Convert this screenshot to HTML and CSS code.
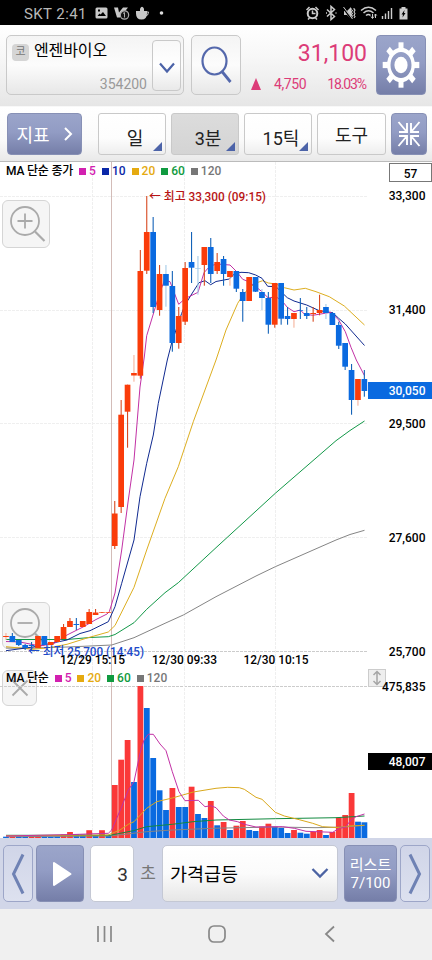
FILE: index.html
```html
<!DOCTYPE html>
<html lang="ko">
<head>
    <meta charset="UTF-8">
    <meta name="viewport" content="width=device-width, initial-scale=1.0">
    <title>엔젠바이오</title>
    <link rel="stylesheet" href="styles.css">
</head>
<body>

    <div class="status-bar">
        <span class="carrier">SKT 2:41</span>
        <svg class="status-left" width="72" height="25" viewBox="94 0 72 25">
            <path fill="#c8c8c8" fill-rule="evenodd" d="M97 7.500h9q1.500 0 1.500 1.500v8q0 1.500-1.500 1.500h-9q-1.500 0-1.500-1.500v-8q0-1.500 1.500-1.500zM97.500 16h8.500l-3-4-2.500 2.500-1-1zM98 9.500v2h2v-2z"/>
            <path fill="#c8c8c8" d="M114 7.500h4l1 5 4-5h5l-8 10h-3z"/>
            <circle cx="124.500" cy="15" r="4.200" fill="#111" stroke="#aaa" stroke-width="1.200"/>
            <path d="M124.500 12.500v5M123 13.500l1.500-1" stroke="#aaa" fill="none"/>
            <path fill="#c8c8c8" d="M136 11h11v2.500q0 6-5.500 6t-5.500-6zM140 8.500h4v3h-4z"/>
            <circle cx="142" cy="8.200" r="1.500" fill="#c8c8c8"/>
            <path d="M146 12h2.500q0 4-3.500 4" stroke="#c8c8c8" fill="none"/>
            <circle cx="161.500" cy="13" r="1.800" fill="#ddd"/>
        </svg>
        <svg class="status-right" width="108" height="25" viewBox="304 0 108 25">
            <g fill="none" stroke="#ccc" stroke-width="1.500">
                <circle cx="312.500" cy="13.500" r="4.800" stroke-width="2"/>
                <path d="M312.500 10.500v3h3M306.500 10l3-3M318.500 10l-3-3M308 19.500l1.500-1.500M317 19.500l-1.500-1.500"/>
                <path d="M327 9.500l7.500 7-3.500 3v-13l3.500 3-7.500 7M326 13h1M335.500 13h1"/>
                <path d="M351 8l-.1 1.500 1.500 1-1.500 1.500 1.500 1.500-1.500 1.500 1.500 1-1 2M354 8v1l1 1-1 2 1 1.500-1 2 1 1-1 1.500" stroke-width="1.100"/>
                <path d="M361 10.500q7.500-6.500 15 0M363.500 13q5-4.500 10 0M366 15.500q2.500-2 4.500 0"/>
                <path d="M372.500 14v4M371 16.500l1.500 2 1.500-2M375.500 18v-4M374.300 15.500l1.200-1.500 1.200 1.500" stroke-width="1"/>
                <path d="M382.500 19v-3M385.500 19v-5.500M388.500 19v-8M391.500 19v-11" stroke-width="1.400"/>
            </g>
            <path fill="#ccc" d="M344 11h3l4-4v12l-4-4h-3z"/>
            <path d="M343.500 8l8 11" stroke="#000" stroke-width="2"/>
            <path d="M343.500 7l9 12" stroke="#ccc"/>
            <path fill="#ccc" fill-rule="evenodd" d="M401.500 7h4v1.500h2v11h-8v-11h2zM404.500 10l-3 4.500h1.500l-.5 3 3-4.500h-1.500z"/>
        </svg>
    </div>

    <div class="header">
        <div class="stock-box">
            <div class="stock-info">
                <div class="stock-name"><span class="market">코</span>엔젠바이오</div>
                <div class="stock-code">354200</div>
            </div>
            <button class="stock-more">
                <svg width="18" height="14" viewBox="0 0 18 14"><path d="M2 2.500l7 8 7-8" fill="none" stroke="#4c63a8" stroke-width="2.200"/></svg>
            </button>
        </div>
        <button class="search-btn">
            <svg width="34" height="42" viewBox="0 0 34 42">
                <ellipse cx="15.500" cy="17" rx="12" ry="13.500" fill="none" stroke="#5468ac" stroke-width="2.200"/>
                <path d="M23 27.500l8.500 10.500" stroke="#5468ac" stroke-width="2.800"/>
            </svg>
        </button>
        <div class="price-box">
            <div class="price">31,100</div>
            <div class="change">
                <span class="up"></span>
                <span class="diff">4,750</span>
                <span class="rate">18.03%</span>
            </div>
        </div>
        <button class="blue-btn gear-btn">
            <svg width="38" height="46" viewBox="-19 -23 38 46">
                <g transform="scale(1 1.240)">
                    <circle r="12.200" fill="none" stroke="#fff" stroke-width="3.400"/>
                    <g id="teeth" fill="#fff"></g>
                    <circle r="6.600" fill="#fff"/>
                </g>
            </svg>
        </button>
    </div>

    <div class="toolbar">
        <button class="blue-btn index-btn">지표
            <svg width="10" height="16" viewBox="0 0 10 16"><path d="M2 2l6 6-6 6" fill="none" stroke="#fff" stroke-width="2"/></svg>
        </button>
        <button class="period corner">일</button>
        <button class="period corner active">3분</button>
        <button class="period corner">15틱</button>
        <button class="period tool">도구</button>
        <button class="blue-btn shrink-btn">
            <svg width="24" height="28" viewBox="0 0 24 28" fill="none" stroke="#fff" stroke-width="1.900">
                <path d="M1.500 2l8 9.500M10 3v9h-8M22.500 2l-8 9.500M14 3v9h8M1.500 26l8-9.500M10 25v-9h-8M22.500 26l-8-9.500M14 25v-9h8"/>
            </svg>
        </button>
    </div>

    <div class="chart price-chart">
        <svg id="priceChart" class="plot" width="432" height="506" viewBox="0 162 432 506"></svg>
        <div class="legend">
            <span class="legend-title">MA 단순 종가</span>
            <span class="ma ma5">5</span>
            <span class="ma ma10">10</span>
            <span class="ma ma20">20</span>
            <span class="ma ma60">60</span>
            <span class="ma ma120">120</span>
        </div>
        <div class="count">57</div>
        <button class="overlay-btn zoom-in">
            <svg width="40" height="42" viewBox="0 0 40 42" fill="none" stroke="#aaa" stroke-width="1.800">
                <circle cx="19" cy="18" r="14"/><path d="M11.500 18h15M19 10.500v15"/><path d="M29 28.500l9.500 9.500" stroke-width="2.200"/>
            </svg>
        </button>
        <button class="overlay-btn zoom-out">
            <svg width="40" height="42" viewBox="0 0 40 42" fill="none" stroke="#aaa" stroke-width="1.800">
                <circle cx="19" cy="18" r="14"/><path d="M11.500 18h15"/><path d="M29 28.500l9.500 9.500" stroke-width="2.200"/>
            </svg>
        </button>
    </div>

    <div class="chart volume-chart">
        <svg id="volumeChart" class="plot" width="432" height="170" viewBox="0 668 432 170"></svg>
        <div class="legend">
            <span class="legend-title">MA 단순</span>
            <span class="ma ma5">5</span>
            <span class="ma ma20">20</span>
            <span class="ma ma60">60</span>
            <span class="ma ma120">120</span>
        </div>
        <button class="overlay-btn close-btn">
            <svg width="18" height="18" viewBox="0 0 18 18"><path d="M1.500 1.500l15 15M16.500 1.500l-15 15" stroke="#aaa" stroke-width="1.800"/></svg>
        </button>
        <button class="resize-btn">
            <svg width="10" height="16" viewBox="0 0 10 16"><path d="M5 1.500v13M1.500 5l3.500-3.500 3.500 3.500M1.500 11l3.500 3.500 3.500-3.500" fill="none" stroke="#a5a5a5" stroke-width="1.500"/></svg>
        </button>
    </div>

    <div class="bottom-bar">
        <button class="arrow-btn">
            <svg width="16" height="42" viewBox="0 0 16 42"><path d="M13 1.500l-9.500 19.500 9.500 19.500" fill="none" stroke="#6f82b4" stroke-width="3"/></svg>
        </button>
        <button class="blue-btn play-btn">
            <svg width="22" height="28" viewBox="0 0 22 28"><path d="M3 3l16.500 11-16.500 11z" fill="#fff" stroke="#fff" stroke-width="2" stroke-linejoin="round"/></svg>
        </button>
        <div class="seconds">3</div>
        <span class="unit">초</span>
        <div class="select">가격급등
            <svg width="18" height="12" viewBox="0 0 18 12"><path d="M1.500 2l7.500 7.500 7.500-7.500" fill="none" stroke="#4c63a3" stroke-width="2.300"/></svg>
        </div>
        <button class="blue-btn list-btn"><span>리스트</span><span>7/100</span></button>
        <button class="arrow-btn">
            <svg width="16" height="42" viewBox="0 0 16 42"><path d="M3 1.500l9.500 19.500-9.500 19.500" fill="none" stroke="#6f82b4" stroke-width="3"/></svg>
        </button>
    </div>

    <div class="nav-bar">
        <svg width="18" height="18" viewBox="0 0 18 18"><path d="M2 1v16M8.500 1v16M15 1v16" stroke="#888" stroke-width="1.700"/></svg>
        <svg width="20" height="20" viewBox="0 0 20 20"><rect x="2" y="2" width="16" height="16" rx="5" fill="none" stroke="#888" stroke-width="1.700"/></svg>
        <svg width="12" height="18" viewBox="0 0 12 18"><path d="M10 1.500l-8 7.500 8 7.500" fill="none" stroke="#888" stroke-width="1.800"/></svg>
    </div>

    <script src="script.js"></script>

</body>
</html>
```
FILE: styles.css
```css
* {
    box-sizing: border-box;
}

body {
    width: 432px;
    margin: 0;
    background: #fff;
    font-family: Roboto, "Noto Sans CJK KR", sans-serif;
    color: #000;
}

button {
    margin: 0;
    padding: 0;
    border: none;
    font-family: inherit;
    cursor: pointer;
}

svg {
    display: block;
    flex-shrink: 0;
}

.status-bar {
    display: flex;
    align-items: center;
    height: 25px;
    padding: 0 20px 0 24px;
    background: #000;
}

.carrier {
    width: 70px;
    padding-top: 3px;
    font-size: 15px;
    line-height: 20px;
    letter-spacing: 0.4px;
    color: #b8b8b8;
    white-space: nowrap;
}

.status-right {
    margin-left: auto;
}

.header {
    display: flex;
    height: 82px;
    padding: 10px 6px 11px;
    background: linear-gradient(#fff, #f7f7f7 40%, #e6e6e6);
    border-bottom: 1px solid #f8f8f8;
}

.stock-box,
.search-btn {
    border: 1px solid #c9c9c9;
    border-radius: 5px;
    background: linear-gradient(#f4f4f4, #fcfcfc 50%, #e7e7e7);
}

.stock-box {
    display: flex;
    width: 178px;
    padding: 4px 2px 3px 5px;
}

.stock-info {
    flex: 1;
}

.stock-name {
    display: flex;
    height: 22px;
    font-size: 16px;
    line-height: 21px;
    letter-spacing: -0.1px;
    white-space: nowrap;
}

.market {
    width: 17px;
    height: 17px;
    margin: 4px 5px 0 0;
    border-radius: 4px;
    background: #d5d5d5;
    font-size: 11px;
    line-height: 16px;
    text-align: center;
    color: #777;
}

.stock-code {
    padding: 13px 5px 0 0;
    font-size: 14px;
    line-height: 18px;
    text-align: right;
    color: #999;
}

.stock-more {
    display: flex;
    align-items: center;
    justify-content: center;
    width: 29px;
    border: 1px solid #c9c9c9;
    border-radius: 4px;
    background: linear-gradient(#f8f8f8, #fff 50%, #e9e9e9);
}

.stock-more svg {
    margin-top: 4px;
}

.search-btn {
    display: flex;
    align-items: center;
    justify-content: center;
    width: 50px;
    margin-left: 7px;
}

.price-box {
    width: 127px;
    padding-right: 1px;
    color: #dc3c78;
}

.price {
    height: 38px;
    padding-top: 5px;
    font-size: 23px;
    line-height: 28px;
    text-align: right;
}

.change {
    display: flex;
    align-items: center;
    justify-content: flex-end;
    font-size: 14px;
    line-height: 22px;
}

.up {
    margin-right: 13px;
    border: 5px solid transparent;
    border-top: 0;
    border-bottom: 12px solid #dc3c78;
}

.diff {
    margin-right: 21px;
    letter-spacing: -0.4px;
}

.rate {
    letter-spacing: -1.1px;
    padding-right: 1px;
}

.blue-btn {
    display: flex;
    align-items: center;
    justify-content: center;
    border: 1px solid #8790b5;
    border-radius: 4px;
    background: linear-gradient(#9ba5ca, #929cc4 45%, #757ea8);
    color: #fff;
}

.gear-btn {
    width: 50px;
    margin-left: 8px;
}

.toolbar {
    display: flex;
    height: 55px;
    padding: 6px 5px 6px 7px;
    background: linear-gradient(#fff, #fafafa 60%, #e9e9e9);
    border-bottom: 1px solid #bbb;
}

.index-btn {
    width: 75px;
    margin-right: 16px;
    gap: 13px;
    font-size: 18px;
}

.period {
    position: relative;
    width: 68px;
    margin-right: 5px;
    padding: 5px 0 0 6px;
    border: 1px solid #c9c9c9;
    border-radius: 3px;
    background: linear-gradient(#fff, #fdfdfd 60%, #eee);
    font-size: 18px;
    color: #222;
}

.period.active {
    background: linear-gradient(#dcdcdc, #d4d4d4);
}

.period.tool {
    width: 69px;
    padding: 0;
}

.corner::after {
    content: "";
    position: absolute;
    right: 3px;
    bottom: 3px;
    border-left: 9px solid transparent;
    border-bottom: 9px solid #4c63a8;
}

.shrink-btn {
    width: 36px;
}

.chart {
    position: relative;
}

/* the plot is painted over the zoom and close buttons */
.plot {
    position: relative;
    z-index: 1;
    pointer-events: none;
}

.price-chart {
    height: 506px;
}

.volume-chart {
    height: 170px;
}

.chart text {
    font-size: 12px;
    font-weight: 500;
}

.legend {
    position: absolute;
    z-index: 2;
    top: 1px;
    left: 6px;
    display: flex;
    font-size: 12px;
    font-weight: 500;
    line-height: 16px;
    white-space: nowrap;
}

.volume-chart .legend {
    top: 2px;
}

.legend-title {
    margin-right: 6px;
    letter-spacing: -0.2px;
}

.ma {
    display: flex;
    align-items: center;
    margin-right: 6px;
}

.ma::before {
    content: "";
    width: 7px;
    height: 7px;
    margin-right: 3px;
    background: currentColor;
}

.ma5 {
    color: #d220b0;
}

.ma10 {
    color: #0a28a8;
}

.ma20 {
    color: #e5aa10;
}

.ma60 {
    color: #109a40;
}

.ma120 {
    color: #777;
}

.count {
    position: absolute;
    z-index: 2;
    top: 1px;
    right: 0;
    width: 43px;
    height: 19px;
    border: 1px solid #777;
    background: #fff;
    font-size: 12px;
    font-weight: 500;
    line-height: 21px;
    text-align: center;
}

.overlay-btn {
    position: absolute;
    left: 2px;
    display: flex;
    align-items: center;
    justify-content: center;
    width: 48px;
    height: 48px;
    border: 1px solid #d5d5d5;
    border-radius: 6px;
    background: #f5f5f5;
}

.zoom-in {
    top: 38px;
}

.zoom-out {
    top: 440px;
    height: 47px;
}

.close-btn {
    top: 2px;
    width: 35px;
    height: 36px;
}

.resize-btn {
    position: absolute;
    top: 1px;
    left: 368px;
    display: flex;
    align-items: center;
    justify-content: center;
    width: 18px;
    height: 18px;
    border: 1px solid #ccc;
    background: #eee;
}

.bottom-bar {
    display: flex;
    height: 71px;
    padding: 7px 2px 7px 3px;
    background: #d1d6e8;
}

.arrow-btn {
    display: flex;
    align-items: center;
    justify-content: center;
    width: 30px;
    border: 1px solid #9da6c8;
    border-radius: 5px;
    background: linear-gradient(#d0d5e8, #dde1ef);
}

.play-btn {
    width: 48px;
    margin: 0 6px 0 3px;
    padding-left: 4px;
}

.seconds {
    width: 44px;
    padding-right: 5px;
    border: 1px solid #c4c8d4;
    border-radius: 5px;
    background: #fff;
    font-size: 19px;
    line-height: 57px;
    text-align: right;
    color: #333;
}

.unit {
    width: 28px;
    font-size: 17px;
    line-height: 56px;
    text-align: center;
    color: #777;
}

.select {
    display: flex;
    align-items: center;
    justify-content: space-between;
    width: 176px;
    padding: 0 8px 1px 7px;
    border: 1px solid #c4c8d4;
    border-radius: 5px;
    background: linear-gradient(#fff, #fbfbfb 50%, #e6e6e6);
    font-size: 18.500px;
}

.list-btn {
    flex-direction: column;
    width: 53px;
    margin: 0 3px 0 6px;
    font-size: 15px;
    line-height: 18px;
}

.nav-bar {
    display: flex;
    align-items: center;
    height: 51px;
    padding: 0 0 2px 96px;
    background: #f0f0f0;
    gap: 95px;
}

.nav-bar svg:nth-child(2) {
    margin: 0 2px 0 -2px;
}
```
FILE: script.js
```js
const SVG = 'http://www.w3.org/2000/svg';
const priceChart = document.getElementById('priceChart');
const volumeChart = document.getElementById('volumeChart');

const STEP = 6.4;
const FIRST = 5.9;
const RED = '#fa3c0a';
const BLUE = '#0a6ae0';

// direction, high, body top, body bottom, low
const candles = [
    ['r', 633, 636, 637, 640], ['b', 633, 636, 642, 642], ['b', 640, 640, 645, 646],
    ['b', 644, 645, 648, 650], ['b', 642, 645, 646, 650], ['r', 636, 636, 648, 648],
    ['b', 636, 636, 645, 645], ['r', 642, 642, 645, 645], ['r', 636, 636, 642, 642],
    ['r', 624, 627, 639, 639], ['r', 618, 621, 627, 627], ['b', 618, 624, 625, 630],
    ['r', 621, 621, 627, 627], ['r', 609, 612, 624, 624], ['r', 609, 612.5, 615, 615],
    ['r', 612, 612, 612.7, 613], ['r', 612, 612, 612.7, 613], ['r', 501, 513.5, 546, 549],
    ['r', 400, 414.7, 507, 513], ['r', 384.7, 384.7, 411.7, 447.7], ['r', 355, 373, 375.5, 381.7],
    ['r', 250, 271, 375.7, 378.7], ['r', 196, 232, 270.7, 274], ['b', 217, 232, 307, 313],
    ['r', 265, 274, 310, 315.7], ['b', 265, 274, 285.7, 306.7], ['b', 271, 286, 343, 351.7],
    ['r', 307, 316, 343, 348.7], ['r', 262, 268, 321.7, 325], ['b', 232, 262, 267.7, 283],
    ['b', 256, 268, 268.7, 294.7], ['r', 247, 247, 265, 285.7], ['b', 238, 247, 274, 283],
    ['r', 253, 262, 271, 274], ['b', 256, 259, 274, 285.7], ['r', 271, 271, 277, 285.7],
    ['b', 271, 271, 288.7, 292], ['b', 289, 292, 301, 321.7], ['r', 277, 277, 301, 301],
    ['b', 277, 277, 291.7, 292], ['b', 289, 292, 298, 310], ['b', 292, 298, 324.7, 333.7],
    ['r', 283, 283, 324.7, 327.7], ['b', 283, 283, 318.7, 324.7], ['b', 307, 316, 319, 324.7],
    ['r', 313, 313, 319, 327.7], ['b', 298, 310, 310.7, 319], ['b', 307, 313, 316, 319],
    ['r', 307, 313, 314, 321.7], ['r', 294.7, 310, 313, 315.3], ['b', 304, 307, 313, 319],
    ['b', 312, 313, 325, 325], ['b', 321.7, 325, 345.7, 349], ['b', 343, 343, 366.7, 370],
    ['b', 364, 370, 400, 414.7], ['r', 379, 379, 400, 405.7], ['b', 370, 379, 391, 396.7]
];

// candles whose wick is drawn pale
const paleWicks = [0, 20, 25, 30, 35, 40, 45, 50, 55];

// direction, bar top
const volumes = [
    ['b', 836.7], ['r', 836.5], ['b', 836.5], ['b', 836.7], ['r', 836.5], ['r', 836.5], ['b', 836.5], ['b', 836.7],
    ['b', 836.5], ['r', 834.5], ['r', 832], ['b', 834.2], ['b', 834.5], ['r', 830.2], ['b', 835], ['r', 830.2],
    ['b', 835.7], ['r', 785], ['r', 759.7], ['r', 740], ['b', 782], ['r', 686], ['b', 708], ['b', 758],
    ['b', 790.3], ['b', 810], ['r', 788], ['b', 807], ['b', 807], ['r', 786.7], ['b', 814], ['b', 818],
    ['r', 801], ['b', 825.3], ['r', 822], ['b', 830], ['r', 825.7], ['r', 821], ['b', 830], ['b', 831],
    ['r', 826.5], ['r', 823.7], ['b', 826.7], ['b', 828], ['b', 833], ['r', 830], ['b', 832.7], ['b', 833.7],
    ['r', 832], ['r', 830], ['b', 835], ['r', 832], ['r', 817.7], ['r', 815], ['r', 793], ['b', 821.7], ['b', 822.3]
];

const priceLines = {
    '#858585': '6,648 33,648 67,647 90,646 111.7,645 134,637.7 165,623.3 183.3,615 216,596.7 256,576 275.3,566.7 336,540 350,534.5 364.5,530.3',
    '#129848': '6,639.5 67,639.5 90,637.5 108.3,636.7 115,634.5 134,622.7 146.7,609.3 165,592.7 178.3,582.7 216,547.7 275.3,493.3 336,440.7 350,430.5 364.5,421',
    '#ddae20': '6,646.7 33,649.3 50,647.5 67,644.3 87,638 108.3,632 115,625.5 134,587.3 146.7,550 165,498.3 178.3,466.7 193.3,421.7 216,360 226,330 237.7,303.3 243,295 249,288 256,283 262.7,280.7 268.3,283 276,284 284.3,287.7 294,290 305.3,288.3 316,291.7 329.3,296.7 344.3,306 364.5,325',
    '#102a90': '6,650.7 33,647 43,645 67,640 80,633.5 90,630.7 108.3,621.7 115,606.7 121.7,583.3 134,540 140,496.7 146.7,463.3 153.3,435 158.3,403.3 167.3,360 172,341.7 176,330 181.7,313.3 185,305 191.7,294 199,282.7 205,280.7 210.7,284.7 216,281.5 229.3,279 234.3,274 241,272.3 248.7,272.7 255.7,275 262,278.3 267.7,286.3 276,286.7 282.7,293.3 287.3,297.7 294,301 306.7,305 319.3,310.7 332.7,312.7 338.7,318.3 345.3,324 364.5,345.5',
    '#c231a5': '6,641.5 20,642 40,646 55,643 67,635 83,627 96,619.5 107,614 109.3,611.7 115,593 121.7,550 128.3,500 134,460 140,387 144.3,357 146.7,335.7 154,311.7 160,292 164.7,280 170,281.7 178.7,304.3 185,298.7 198,292.3 204,272.7 210,266 217,264 230,265 236.7,271.7 242.7,279.3 248.7,281.7 255.7,286.7 262,291.7 268.3,298 276,296.7 282.7,301.7 287.3,307.3 294,311.7 300.3,310 304.3,314 312.7,315.3 331,312.3 338.7,320 345.3,331.7 351,347.3 356.3,360 364.5,375.7'
};

const volumeLines = {
    '#858585': '6,836.7 110,836 146.7,831.7 172.3,830 216,828.2 275.3,827 316,827.7 345,827 364.5,825.3',
    '#128a40': '6,835.3 110,835.3 133.3,830.7 146.7,826.7 172.3,824.3 193,821.7 216,820 275.3,818.7 336,817.7 364.5,816',
    '#d9a81c': '6,835.7 108,835 120,830 128.3,824.3 134,821.7 146.7,808.3 156.7,801.7 172.3,798 193.3,792 216,788.3 227.7,787.3 239.3,787.7 244.3,789.3 256,797.3 262,799.3 275.3,812.3 284.3,816 299.3,819.7 312.7,823.3 322.7,826.7 339.3,827.7 349,826 364.5,825.3',
    '#c231a5': '6,836 73,834.5 108.3,833.3 111.7,830 121,808.3 128.3,790 134,781.7 140,753.3 144,740 148.3,734.3 153.3,734.3 160,744 166,750.7 172.3,771.7 179,791.7 185,800.7 198.3,800.3 205,806.7 210.7,805.7 216,807.7 223.3,816 229.3,820 237.7,821.7 244.3,824.3 256,827 282.7,826.7 294.3,828.3 306,831.3 332.7,832.3 339.3,828.3 345.3,827.3 351,820 356,816.7 364.5,814'
};

function draw(parent, name, attrs, text) {
    const el = document.createElementNS(SVG, name);
    for (const key in attrs) {
        el.setAttribute(key, attrs[key]);
    }
    if (text) {
        el.textContent = text;
    }
    parent.appendChild(el);
}

function line(parent, x1, y1, x2, y2, stroke, dash) {
    draw(parent, 'line', { x1, y1, x2, y2, stroke, 'stroke-dasharray': dash || 'none' });
}

function drawLines(parent, lines) {
    for (const color in lines) {
        draw(parent, 'polyline', { points: lines[color], fill: 'none', stroke: color, 'stroke-width': 1 });
    }
}

function drawPriceChart() {
    [196.5, 310.5, 423.5, 537.5].forEach(y => line(priceChart, 0, y, 368, y, '#efefef', '3 1'));
    line(priceChart, 0, 651.5, 368, 651.5, '#ccc', '3 1');
    [92.5, 184.5, 275.5].forEach(x => line(priceChart, x, 162, x, 668, '#efefef', '3 1'));
    line(priceChart, 111.5, 162, 111.5, 668, '#d3bcb8');

    drawLines(priceChart, priceLines);

    candles.forEach(([dir, high, top, bottom, low], i) => {
        const x = FIRST + i * STEP;
        const color = dir === 'r' ? RED : BLUE;
        const pale = dir === 'r' ? '#f5b49c' : '#a4cbe8';
        const wick = paleWicks.includes(i) ? pale : (dir === 'r' ? '#d84a22' : '#1463b8');
        draw(priceChart, 'rect', { x: x - 0.5, y: high, width: 1.1, height: low - high, fill: wick });
        draw(priceChart, 'rect', { x: x - 2.8, y: top, width: 5.7, height: bottom - top, fill: i === 30 ? pale : color });
    });

    draw(priceChart, 'text', { x: 149, y: 201, fill: '#b81414', textLength: 117, lengthAdjust: 'spacingAndGlyphs' }, '← 최고 33,300 (09:15)');
    draw(priceChart, 'text', { x: 28, y: 655.5, fill: '#1c4ac8', textLength: 116, lengthAdjust: 'spacingAndGlyphs' }, '← 최저 25,700 (14:45)');

    [['12/29 15:15', 60], ['12/30 09:33', 152], ['12/30 10:15', 243.5]].forEach(([label, x]) => {
        draw(priceChart, 'text', { x, y: 664, textLength: 65, lengthAdjust: 'spacingAndGlyphs' }, label);
    });

    [['33,300', 200], ['31,400', 314], ['29,500', 427.5], ['27,600', 541.7], ['25,700', 655.5]].forEach(([label, y]) => {
        draw(priceChart, 'text', { x: 425.5, y, 'text-anchor': 'end' }, label);
    });

    draw(priceChart, 'rect', { x: 368, y: 382, width: 64, height: 17, fill: '#0a6ae0' });
    draw(priceChart, 'text', { x: 425.5, y: 395, 'text-anchor': 'end', fill: '#fff' }, '30,050');
}

function drawVolumeChart() {
    line(volumeChart, 0, 686.5, 368, 686.5, '#ccc', '3 1');
    [92.5, 184.5, 275.5].forEach(x => line(volumeChart, x, 668, x, 838, '#efefef', '3 1'));
    line(volumeChart, 111.5, 668, 111.5, 838, '#d3bcb8');

    volumes.forEach(([dir, top], i) => {
        const x = FIRST + i * STEP;
        draw(volumeChart, 'rect', { x: x - 2.8, y: top, width: 5.8, height: 838 - top, fill: dir === 'r' ? '#fa3838' : BLUE });
    });

    drawLines(volumeChart, volumeLines);

    draw(volumeChart, 'text', { x: 425.5, y: 690.5, 'text-anchor': 'end' }, '475,835');
    draw(volumeChart, 'rect', { x: 368, y: 753, width: 64, height: 17, fill: '#000' });
    draw(volumeChart, 'text', { x: 425.5, y: 766, 'text-anchor': 'end', fill: '#fff' }, '48,007');
}

// gear teeth, every 45 degrees
const teeth = document.getElementById('teeth');
for (let a = 0; a < 360; a += 45) {
    draw(teeth, 'rect', { x: -2.5, y: -18.3, width: 5, height: 6, transform: `rotate(${a})` });
}

drawPriceChart();
drawVolumeChart();
```
